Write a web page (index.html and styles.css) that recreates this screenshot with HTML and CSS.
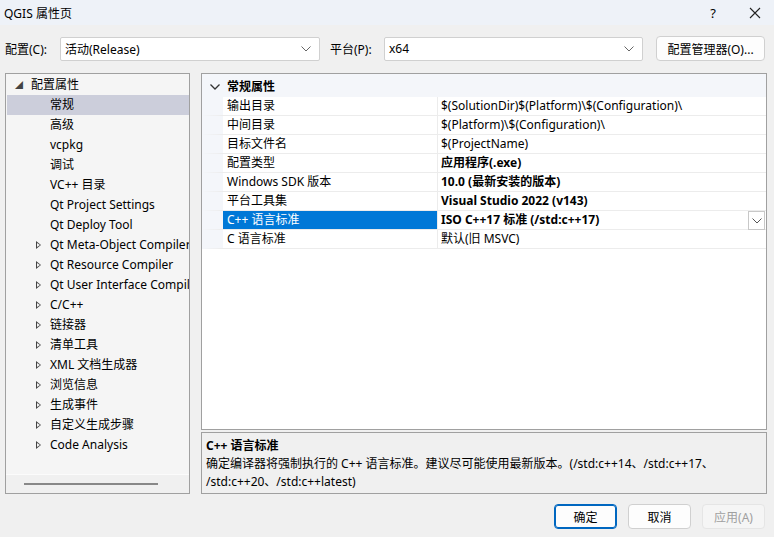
FILE: index.html
```html
<!DOCTYPE html>
<html lang="zh-CN">
<head>
  <meta charset="UTF-8" />
  <title>QGIS 属性页</title>
  <link rel="stylesheet" href="styles.css">
</head>
<body>
  <div class="titlebar">
    <span class="title">QGIS 属性页</span>
    <span class="tb-btn help">?</span>
    <span class="tb-btn close">
      <svg width="12" height="12" viewBox="0 0 12 12"><path d="M1 1L11 11M11 1L1 11" stroke="#222" stroke-width="1.1" fill="none"/></svg>
    </span>
  </div>

  <div class="config-row">
    <label class="cfg-label">配置(C):</label>
    <div class="combo combo-config">
      <span>活动(Release)</span>
      <svg class="chev" width="10" height="6" viewBox="0 0 10 6"><path d="M0.5 0.5L5 5L9.5 0.5" stroke="#666" fill="none"/></svg>
    </div>
    <label class="cfg-label plat">平台(P):</label>
    <div class="combo combo-platform">
      <span>x64</span>
      <svg class="chev" width="10" height="6" viewBox="0 0 10 6"><path d="M0.5 0.5L5 5L9.5 0.5" stroke="#666" fill="none"/></svg>
    </div>
    <button class="btn btn-manager">配置管理器(O)...</button>
  </div>

  <div class="main">
    <div class="tree">
      <div class="tree-items">
        <div class="node root"><span class="exp">&#9698;</span>配置属性</div>
        <div class="node leaf selected">常规</div>
        <div class="node leaf">高级</div>
        <div class="node leaf">vcpkg</div>
        <div class="node leaf">调试</div>
        <div class="node leaf">VC++ 目录</div>
        <div class="node leaf">Qt Project Settings</div>
        <div class="node leaf">Qt Deploy Tool</div>
        <div class="node col"><span class="tri"></span>Qt Meta-Object Compiler</div>
        <div class="node col"><span class="tri"></span>Qt Resource Compiler</div>
        <div class="node col"><span class="tri"></span>Qt User Interface Compiler</div>
        <div class="node col"><span class="tri"></span>C/C++</div>
        <div class="node col"><span class="tri"></span>链接器</div>
        <div class="node col"><span class="tri"></span>清单工具</div>
        <div class="node col"><span class="tri"></span>XML 文档生成器</div>
        <div class="node col"><span class="tri"></span>浏览信息</div>
        <div class="node col"><span class="tri"></span>生成事件</div>
        <div class="node col"><span class="tri"></span>自定义生成步骤</div>
        <div class="node col"><span class="tri"></span>Code Analysis</div>
      </div>
      <div class="hscroll"><div class="thumb"></div></div>
    </div>

    <div class="right">
      <div class="grid">
        <div class="grid-head">
          <span class="gh-icon"><svg width="10" height="6" viewBox="0 0 10 6"><path d="M0.5 0.5L5 5L9.5 0.5" stroke="#333" stroke-width="1.3" fill="none"/></svg></span>
          <span class="gh-text">常规属性</span>
        </div>
        <div class="prop"><span class="pname">输出目录</span><span class="pval">$(SolutionDir)$(Platform)\$(Configuration)\</span></div>
        <div class="prop"><span class="pname">中间目录</span><span class="pval">$(Platform)\$(Configuration)\</span></div>
        <div class="prop"><span class="pname">目标文件名</span><span class="pval">$(ProjectName)</span></div>
        <div class="prop"><span class="pname">配置类型</span><span class="pval bold">应用程序(.exe)</span></div>
        <div class="prop"><span class="pname">Windows SDK 版本</span><span class="pval bold">10.0 (最新安装的版本)</span></div>
        <div class="prop"><span class="pname">平台工具集</span><span class="pval bold">Visual Studio 2022 (v143)</span></div>
        <div class="prop active"><span class="pname">C++ 语言标准</span><span class="pval bold">ISO C++17 标准 (/std:c++17)</span>
          <span class="drop"><svg width="10" height="6" viewBox="0 0 10 6"><path d="M0.5 0.5L5 5L9.5 0.5" stroke="#555" fill="none"/></svg></span>
        </div>
        <div class="prop"><span class="pname">C 语言标准</span><span class="pval">默认(旧 MSVC)</span></div>
      </div>
      <div class="desc">
        <div class="desc-title">C++ 语言标准</div>
        <div class="desc-text">确定编译器将强制执行的 C++ 语言标准。建议尽可能使用最新版本。(/std:c++14、/std:c++17、<br>/std:c++20、/std:c++latest)</div>
      </div>
    </div>
  </div>

  <div class="buttons">
    <button class="btn btn-ok">确定</button>
    <button class="btn">取消</button>
    <button class="btn btn-disabled">应用(A)</button>
  </div>
</body>
</html>
```

FILE: styles.css
```css
html, body {
  margin: 0;
  padding: 0;
}
body {
  width: 774px;
  height: 537px;
  overflow: hidden;
  background: #f0f0f0;
  font-family: "Noto Sans", "Noto Sans CJK SC", sans-serif;
  font-size: 12px;
  color: #000;
}
.titlebar {
  height: 25px;
  background: #eef2f8;
  display: flex;
  align-items: center;
  padding-left: 4px;
}
.title {
  flex: 1;
  font-size: 12px;
}
.tb-btn {
  width: 46px;
  text-align: center;
  display: flex;
  justify-content: center;
  align-items: center;
}
.help {
  font-size: 13px;
}
.close {
  width: 38px;
}
.config-row {
  display: flex;
  align-items: center;
  height: 25px;
  margin-top: 11px;
  padding-left: 5px;
}
.cfg-label {
  width: 55px;
}
.cfg-label.plat {
  width: 54px;
  margin-left: 10px;
}
.combo {
  height: 22px;
  background: #fff;
  border: 1px solid #d0d0d0;
  border-radius: 2px;
  display: flex;
  align-items: center;
  padding: 0 4px;
  justify-content: space-between;
}
.combo-config {
  width: 250px;
}
.combo-platform {
  width: 249px;
}
.chev {
  margin-right: 4px;
}
.btn {
  font-family: inherit;
  font-size: 12px;
  background: #fdfdfd;
  border: 1px solid #d0d0d0;
  border-radius: 4px;
  height: 25px;
  padding: 0;
  color: #000;
}
.btn-manager {
  width: 109px;
  margin-left: 13px;
}
.main {
  display: flex;
  margin-top: 12px;
  padding-left: 5px;
  height: 421px;
}
.tree {
  width: 183px;
  border: 1px solid #a0a0a0;
  background: #f5f5f5;
  display: flex;
  flex-direction: column;
  overflow: hidden;
}
.tree-items {
  flex: 1;
  padding-top: 1px;
  padding-left: 1px;
}
.node {
  height: 20px;
  line-height: 20px;
  white-space: nowrap;
  overflow: hidden;
  position: relative;
}
.root {
  padding-left: 24px;
}
.exp {
  position: absolute;
  left: 8px;
  top: 0;
  font-size: 8px;
  color: #444;
}
.leaf, .col {
  padding-left: 43px;
}
.selected {
  background: #cccedb;
}
.tri {
  position: absolute;
  left: 29px;
  top: 6px;
  width: 0;
  height: 0;
  border-left: 5px solid #444;
  border-top: 4px solid transparent;
  border-bottom: 4px solid transparent;
}
.tri::after {
  content: "";
  position: absolute;
  left: -4px;
  top: -2px;
  border-left: 3px solid #f5f5f5;
  border-top: 2px solid transparent;
  border-bottom: 2px solid transparent;
}
.hscroll {
  height: 18px;
  border-top: 1px solid #fbfbfb;
  background: #f0f0f0;
  display: flex;
  align-items: center;
  padding-left: 18px;
}
.thumb {
  width: 134px;
  height: 2px;
  background: #888;
}
.right {
  flex: 1;
  margin-left: 11px;
  margin-right: 7px;
  display: flex;
  flex-direction: column;
}
.grid {
  height: 357px;
  border: 1px solid #a0a0a0;
  background: #fff;
  overflow: hidden;
}
.grid-head {
  height: 23px;
  background: #f4f6fa;
  display: flex;
  align-items: center;
}
.gh-icon {
  width: 25px;
  display: flex;
  justify-content: center;
  padding-top: 2px;
}
.gh-text {
  font-weight: bold;
}
.prop {
  height: 18px;
  line-height: 18px;
  display: flex;
  border-bottom: 1px solid #ececec;
  border-left: 21px solid #f4f6fa;
  position: relative;
  white-space: nowrap;
}
.pname {
  width: 210px;
  padding-left: 4px;
  border-right: 1px solid #ececec;
  overflow: hidden;
}
.pval {
  padding-left: 3px;
  flex: 1;
  overflow: hidden;
}
.bold {
  font-weight: bold;
}
.active .pname {
  background: #0078d7;
  color: #fff;
}
.drop {
  position: absolute;
  right: 1px;
  top: 0;
  width: 15px;
  height: 17px;
  background: #fff;
  border: 1px solid #c8c8c8;
  display: flex;
  align-items: center;
  justify-content: center;
}
.desc {
  margin-top: 2px;
  height: 56px;
  border: 1px solid #a0a0a0;
  padding: 4px 4px 0 4px;
  line-height: 18px;
}
.desc-title {
  font-weight: bold;
}
.desc-text {
  white-space: nowrap;
}
.buttons {
  display: flex;
  justify-content: flex-end;
  gap: 11px;
  margin-top: 10px;
  padding-right: 9px;
}
.buttons .btn {
  width: 63px;
}
.btn-ok {
  border: 1px solid #0067c0;
  box-shadow: inset 0 0 0 1px #0067c0;
}
.btn-disabled {
  background: #f5f5f5;
  border-color: #e5e5e5;
  color: #a0a0a0;
}
```
